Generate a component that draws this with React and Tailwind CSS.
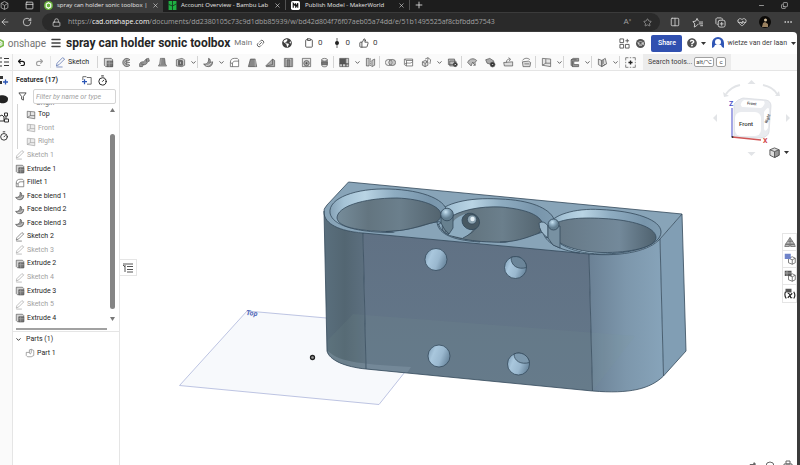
import { ArrowLeft, ChevronDown, Clipboard, Columns2, Copy, Ellipsis, GraduationCap, HeartPulse, Link2, Lock, Menu, Minus, PanelTop, Plus, Redo2, RotateCw, Star, ThumbsUp, Timer, Undo2, X } from "lucide-react"
import { FaQuestionCircle, FaGlobeAmericas } from "react-icons/fa"

const shapes = {
  extrude: (
    <>
      <path d="M2 2h10l2 2v10H4l-2-2z" fill="#d4d4d4" />
      <path d="M6 6h8v8H6z" fill="#777" />
      <path d="M6 9h8M9 6v8" stroke="#aaa" />
    </>
  ),
  revolve: (
    <>
      <path d="M13 4a6 6 0 1 0 0 8l-3-2a2.500 2.500 0 1 1 0-4z" fill="#aaa" />
      <path d="M8 5v6M8 8h5" />
    </>
  ),
  sweep: (
    <>
      <path d="M1 14c-1-6 2-7 5-7s2-5 8-5l1 4c-4 0-2 4-6 5s-3 0-4 3z" fill="#999" />
      <path d="M11 3v4M3 10l4 1" />
    </>
  ),
  loft: (
    <>
      <path d="M5 2h6l1 8 2 3H2l2-3z" fill="#888" />
      <path d="M2 13h12M6 2l-1 9" stroke="#bbb" />
    </>
  ),
  thicken: (
    <>
      <path d="M2 4l8-2 4 2v8l-4 2-8-1z" fill="#ccc" />
      <path d="M5 5h6v7H5z" fill="#666" />
      <path d="M14 4l-3 1M8 7v3" stroke="#ddd" />
    </>
  ),
  blend: (
    <>
      <path d="M1 10c4 1 8-2 7-8l2 1c1 3 1 4 0 5l4-1c0 4-2 7-6 7-4 0-6-2-7-4z" fill="#999" />
      <path d="M4 12c3 1 7-1 8-4" stroke="#eee" />
    </>
  ),
  fillet: <path d="M2 14V8c0-4 2-6 6-6h4l2 2v10zM2 8l3 2v4M5 10c0-3 2-4 5-4h4" fill="#fff" />,
  chamfer: (
    <>
      <path d="M5 3h7l2 11H2z" fill="#888" />
      <path d="M12 3v11" stroke="#ccc" />
    </>
  ),
  draft: (
    <>
      <path d="M1 13L11 3l3 2v9H2z" fill="#aaa" />
      <path d="M11 3v8L2 13" />
    </>
  ),
  rib: (
    <>
      <path d="M2 2h12v12H2z" fill="#ddd" />
      <path d="M6 4h4v10H6z" fill="#888" />
      <path d="M4 2v12M12 2v12" />
    </>
  ),
  shell: (
    <>
      <path d="M2 2h12v12H2z" fill="#e5e5e5" />
      <circle cx="8" cy="9" r="4" fill="#aaa" />
      <circle cx="8" cy="9" r="1" fill="#444" />
    </>
  ),
  cylinder: (
    <>
      <path d="M4 4v8c0 3 8 3 8 0V4z" fill="#ddd" />
      <path d="M4 7h8v4H4z" fill="#777" />
      <ellipse cx="8" cy="4" rx="4" ry="2" fill="#eee" />
    </>
  ),
  pattern: (
    <>
      <path d="M1 2h9v8H1z" fill="#555" />
      <path d="M10 2h4v8h-4zM1 10h4v4H1zM5 10h5v4H5zM10 10h4v4h-4z" fill="#ccc" />
    </>
  ),
  mirror: (
    <>
      <path d="M2 2h4v11H2zM10 5l4-2v9l-4 2z" fill="#ccc" />
      <path d="M8 2v12" strokeDasharray="2 1" />
    </>
  ),
  boolean: (
    <>
      <ellipse cx="5.500" cy="8" rx="5" ry="4.500" fill="#eee" />
      <ellipse cx="10.500" cy="8" rx="5" ry="4.500" fill="#9998" />
    </>
  ),
  split: <path d="M3 3h11v10H5l-3-2V3l3 2v8M5 5h9M3 10c4-3 6 1 11-3" fill="#fff" />,
  transform: (
    <>
      <path d="M2 7l4-2 4 2v5l-4 2-4-2zM2 7l4 2 4-2M6 9v5" fill="#ddd" />
      <path d="M6 3l4-2 4 3-1 6M10 1v4l-3 2" />
    </>
  ),
  deleteFace: (
    <>
      <path d="M2 3h9v8H2zM4 6h9v7H4z" fill="#bbb" />
      <circle cx="12" cy="11" r="3" fill="#333" />
      <path d="M11 10l2 2M13 10l-2 2" stroke="#fff" />
    </>
  ),
  moveFace: (
    <>
      <path d="M1 8c2-6 9-7 13-3l-3 4-3-1-2 5z" fill="#bbb" />
      <path d="M8 8l4 4M12 9v3H9" />
    </>
  ),
  offset: (
    <>
      <path d="M1 4l6-2 6 4-3 5-7-2z" fill="#aaa" />
      <circle cx="11" cy="11" r="3.500" fill="#333" />
      <path d="M10 11h2" stroke="#fff" />
    </>
  ),
  replace: (
    <>
      <path d="M1 8l13-1v6H2z" fill="#ddd" />
      <path d="M5 8c0-4 2-5 5-5M8 1l3 2-2 3" />
    </>
  ),
  fill: (
    <>
      <path d="M2 7l9-1 3 2-1 6H3z" fill="#ddd" />
      <path d="M2 5c3-4 8-4 11-1M5 10h7" />
    </>
  ),
  plane: (
    <>
      <path d="M2 2l12 1v11L2 12z" fill="#e5e5e5" />
      <path d="M7 3v6h7M7 9l-5 3" />
    </>
  ),
  frame: (
    <>
      <path d="M3 4l3-2h8v4H7v5h7v3H5l-2-2z" fill="#999" />
      <path d="M3 4h8M5 6v8" />
    </>
  ),
  sheet: (
    <>
      <path d="M2 3l5 2v9l-5-3zM7 5l5-3 2 8-7 4z" fill="#ddd" />
      <path d="M9 4v6M12 10l-3 3" />
    </>
  ),
  custom: (
    <>
      <path d="M1 5V1h4M11 1h4v4M15 11v4h-4M5 15H1v-4M7 1h2M7 15h2M1 7v2M15 7v2" />
      <path d="M8 5v6M5 8h6" stroke="#222" strokeWidth="2" />
    </>
  ),
  pencil: <path d="M2 13l1-4L11 1l3 2-8 8zM2 14.500h9" fill="none" />,
  part: <path d="M2 7h5V3l3-1 4 2v8l-4 2H4l-2-2zM7 7c0 3 3 3 3 0V2" fill="#fff" />,
}

const Glyph = ({ name, className = "size-3 text-neutral-600" }) => (
  <svg viewBox="0 0 16 16" className={className} fill="none" stroke="currentColor" strokeLinejoin="round" aria-hidden="true">
    {shapes[name]}
  </svg>
)

// "v" is a drop-down arrow, "|" a separator
const tools = [
  "|", "extrude", "revolve", "sweep", "loft", "thicken", "v",
  "|", "blend", "v", "fillet", "chamfer", "draft", "rib", "shell", "cylinder",
  "|", "pattern", "v", "mirror",
  "|", "boolean", "split", "transform", "v", "deleteFace",
  "|", "moveFace", "offset", "replace", "fill",
  "|", "plane", "v",
  "|", "frame", "v",
  "|", "sheet", "v",
  "|", "custom",
]

const features = [
  { name: "Top", icon: "plane", nested: true },
  { name: "Front", icon: "plane", nested: true, hidden: true },
  { name: "Right", icon: "plane", nested: true, hidden: true },
  { name: "Sketch 1", icon: "pencil", hidden: true },
  { name: "Extrude 1", icon: "extrude" },
  { name: "Fillet 1", icon: "fillet" },
  { name: "Face blend 1", icon: "blend" },
  { name: "Face blend 2", icon: "blend" },
  { name: "Face blend 3", icon: "blend" },
  { name: "Sketch 2", icon: "pencil" },
  { name: "Sketch 3", icon: "pencil", hidden: true },
  { name: "Extrude 2", icon: "extrude" },
  { name: "Sketch 4", icon: "pencil", hidden: true },
  { name: "Extrude 3", icon: "extrude" },
  { name: "Sketch 5", icon: "pencil", hidden: true },
  { name: "Extrude 4", icon: "extrude" },
]

function BrowserTabs() {
  return (
    <div className="flex h-3 shrink-0 items-center bg-[#1d1d1d] pr-2 pb-[2px] font-['Open_Sans',sans-serif] text-[6px] leading-[9px] text-neutral-200">
      <div className="flex w-10 items-center gap-4">
        <svg viewBox="0 0 16 16" className="size-[9px]" fill="none" stroke="#aaa" strokeWidth="1.500">
          <path d="M8 1l6 3v8l-6 3-6-3V4zM2 4l6 4 6-4M8 8v7" />
        </svg>
        <PanelTop className="size-[9px]" />
      </div>
      <div className="-mb-[2px] flex h-3 w-[123px] items-center gap-1 bg-[#3b3b3b] px-1 pb-[2px]">
        <svg viewBox="0 0 16 16" className="size-[9px] shrink-0">
          <circle cx="8" cy="8" r="8" fill="#69b13c" />
          <path d="M8 3l4 2.500v5L8 13l-4-2.500v-5z" fill="none" stroke="#fff" strokeWidth="2" />
        </svg>
        <span className="flex-1 whitespace-nowrap">spray can holder sonic toolbox |</span>
        <button aria-label="Close tab"><X className="size-[7px]" /></button>
      </div>
      <div className="flex h-full w-[123px] items-center gap-1 border-r border-neutral-600 pr-1 pl-[5px]">
        <svg viewBox="0 0 16 16" className="size-[9px] shrink-0">
          <path d="M1 0h14v16H1z" fill="#1fae42" />
          <path d="M8 0v16M1 6l7 3M8 9l7-4" stroke="#14351c" strokeWidth="1.500" />
        </svg>
        <span className="flex-1 whitespace-nowrap">Account Overview - Bambu Lab</span>
        <button aria-label="Close tab"><X className="size-[7px]" /></button>
      </div>
      <div className="flex h-full w-[124px] items-center gap-[5px] border-r border-neutral-600 pr-1 pl-[5px]">
        <svg viewBox="0 0 16 16" className="size-[9px] shrink-0">
          <rect width="16" height="16" rx="3" fill="#fff" />
          <path d="M4 12V4l4 5V4M8 12l4-8v8" fill="none" stroke="#111" strokeWidth="2" />
        </svg>
        <span className="flex-1 whitespace-nowrap">Publish Model - MakerWorld</span>
        <button aria-label="Close tab"><X className="size-[7px]" /></button>
      </div>
      <button aria-label="New tab" className="ml-1"><Plus className="size-[10px]" /></button>
      <div className="ml-auto flex items-center gap-4 pr-1">
        <button aria-label="Minimize"><Minus className="size-[7px]" /></button>
        <button aria-label="Restore"><Copy className="size-[7px] -scale-x-100 rotate-180" /></button>
      </div>
    </div>
  )
}

function AddressBar() {
  return (
    <div className="flex h-5 shrink-0 items-center bg-[#3b3b3b] text-neutral-300">
      <div className="flex w-[42px] items-center gap-3">
        <button aria-label="Back"><ArrowLeft className="size-[10px]" /></button>
        <button aria-label="Refresh"><RotateCw className="size-[10px]" /></button>
      </div>
      <div className="flex h-[18px] flex-1 items-center rounded-full bg-[#2a2a2a] pr-2 pl-[10px]">
        <Lock className="size-[9px]" />
        <p className="ml-[7px] flex-1 font-['Open_Sans',sans-serif] text-[7px] whitespace-nowrap text-neutral-400">
          https://<span className="text-neutral-100">cad.onshape.com</span>/documents/dd2380105c73c9d1dbb85939/w/bd42d804f76f07aeb05a74dd/e/51b1495525af8cbfbdd57543
        </p>
        <button aria-label="Read aloud" className="mr-3 text-[8px] text-neutral-400">A<sup className="text-[5px]">»</sup></button>
        <button aria-label="Add to favorites"><Star className="size-[9px] text-neutral-400" /></button>
      </div>
      <div className="flex w-[140px] items-center justify-between pr-[7px] pl-[10px]">
        <button aria-label="Split screen"><Columns2 className="size-[10px]" /></button>
        <button aria-label="Favorites">
          <svg viewBox="0 0 12 12" className="size-[11px]" fill="none" stroke="currentColor" strokeLinejoin="round">
            <path d="M7 7.500L5 9.500 2.500 11 3 7.500 1 5l3-.5L5.500 1.500 7 4.500M7.500 5.500H12M7.500 7.500H12M9 9.500h3" />
          </svg>
        </button>
        <button aria-label="Collections">
          <svg viewBox="0 0 12 12" className="size-[11px]" fill="none" stroke="currentColor">
            <path d="M3 8H2L1 7V2l1-1h5l1 1v1" />
            <rect x="3.500" y="3.500" width="7.500" height="7.500" rx="2" />
            <path d="M7.300 5.500v4M5.300 7.500h4" />
          </svg>
        </button>
        <button aria-label="Browser essentials"><HeartPulse className="size-[10px]" /></button>
        <button aria-label="Profile">
          <svg viewBox="0 0 12 12" className="size-3">
            <circle cx="6" cy="6" r="6" fill="#0c0a08" />
            <path d="M3 11l1-4 2-1 3 2v3z" fill="#9a815f" />
            <circle cx="6.500" cy="4" r="1.500" fill="#d9c3a0" />
          </svg>
        </button>
        <button aria-label="More"><Ellipsis className="size-[10px]" /></button>
      </div>
    </div>
  )
}

function DocumentHeader() {
  return (
    <header className="flex h-[22px] shrink-0 items-center text-neutral-700">
      <a href="#home" className="flex w-[46px] items-center text-[10px] text-neutral-500">
        <svg viewBox="0 0 6 12" className="mr-[3px] h-[11px] w-[6px]">
          <path d="M-1 1l5 2.500v5L-1 11" fill="none" stroke="#78b84a" strokeWidth="2" />
          <path d="M-1 4l2.500 1v2.500L-1 9" fill="none" stroke="#a5cf86" />
        </svg>
        onshape
      </a>
      <button aria-label="Menu" className="ml-1"><Menu className="size-[12px]" strokeWidth={3} /></button>
      <h1 className="ml-1 text-[12px] font-bold whitespace-nowrap text-neutral-800">spray can holder sonic toolbox</h1>
      <span className="ml-1 text-[8px] text-neutral-500">Main</span>
      <Link2 className="ml-1 size-[9px] -rotate-45" />
      <FaGlobeAmericas className="ml-[17px] size-[10px]" />
      <div className="ml-3 flex items-center gap-[9px] text-[8px]">
        <span className="flex items-center gap-1"><Clipboard className="size-[10px]" />0</span>
        <span className="flex items-center gap-1">
          <svg viewBox="0 0 10 10" className="size-[10px]"><path d="M5 0v10" stroke="#666" /><circle cx="5" cy="5" r="2" fill="#222" /></svg>0
        </span>
        <span className="flex items-center gap-1"><ThumbsUp className="size-[10px]" />0</span>
      </div>
      <div className="ml-auto flex items-center">
        <button aria-label="App store">
          <svg viewBox="0 0 12 12" className="size-[11px]" fill="none" stroke="#555">
            <path d="M1 1h4v4H1zM1 7h4v4H1zM7 7h4v4H7zM9 1v4M7 3h4" />
          </svg>
        </button>
        <button aria-label="Learning center" className="ml-[6px] rounded-full bg-neutral-600 p-px text-white"><GraduationCap className="size-[7px]" /></button>
        <button className="ml-[6px] h-[17px] w-[31px] rounded-xs bg-[#3050b0] text-[7px] font-medium text-white">Share</button>
        <button aria-label="Help" className="ml-[5px] flex items-center gap-1"><FaQuestionCircle className="size-[10px] text-neutral-600" /><Caret /></button>
        <button className="ml-[6px] flex items-center text-[7px] whitespace-nowrap">
          <svg viewBox="0 0 12 12" className="mr-[3px] size-3">
            <path d="M0 11V6a6 6 0 0 1 12 0v5l-2-1-1-2H3l-1 2z" fill="#2f55b5" />
            <circle cx="6" cy="5" r="3" fill="#fff" />
          </svg>
          wietze van der laan
          <span className="mr-px ml-1"><Caret /></span>
        </button>
      </div>
    </header>
  )
}

const Caret = () => (
  <svg viewBox="0 0 5 3" className="h-[3px] w-[5px]"><path d="M0 0h5L2.500 3z" fill="#333" /></svg>
)

function Toolbar() {
  return (
    <div className="flex h-[17px] shrink-0 items-center border-b border-neutral-200 bg-[#fafafa] text-neutral-600">
      <button aria-label="Feature list" className="flex h-full w-[13px] items-center border-r border-neutral-200">
        <svg viewBox="0 0 9 10" className="h-[10px] w-[9px]" fill="none" stroke="#333"><path d="M0 1h2M0 5h2M0 9h2M4 1.500h5M4 5h5M4 8.500h5" /></svg>
      </button>
      <button aria-label="Undo" className="ml-1 w-[10px]"><Undo2 className="size-[9px] text-neutral-900" strokeWidth={3} /></button>
      <button aria-label="Redo" className="ml-2 w-[15px]"><Redo2 className="size-[9px] text-neutral-400" strokeWidth={3} /></button>
      <button className="flex h-3 w-[47px] items-center gap-[2px] border-l border-neutral-200 pl-1 text-[7px] text-neutral-800">
        <Glyph name="pencil" className="size-[11px] text-[#4a64a8]" />
        Sketch
      </button>
      {tools.map((tool, index) => {
        if (tool === "|") return <span key={index} className="h-3 w-[2px] border-l border-neutral-300" />
        if (tool === "v")
          return (
            <button key={index} aria-label="More tools" className="flex w-2 justify-center">
              <ChevronDown className="size-[7px]" strokeWidth={3} />
            </button>
          )
        return (
          <button key={index} aria-label={tool} className="flex w-[18px] justify-center">
            <Glyph name={tool} className="size-[11px]" />
          </button>
        )
      })}
      <button className="ml-1 flex h-4 items-center gap-[2px] bg-neutral-200/70 px-[5px] text-[8px] whitespace-nowrap text-neutral-700">
        <span className="text-[7px]">Search tools...</span>
        <kbd className="rounded-xs border border-neutral-400 bg-white px-px font-['Roboto',sans-serif] text-[6px] leading-[8px]">alt/⌥</kbd>
        <kbd className="rounded-xs border border-neutral-400 bg-white px-[2px] font-['Roboto',sans-serif] text-[6px] leading-[8px]">c</kbd>
      </button>
    </div>
  )
}

function FeaturePanel() {
  return (
    <aside className="flex w-[107px] shrink-0 flex-col border-r border-neutral-200 bg-white text-[7px] leading-[9px] text-neutral-800">
      <div className="flex h-[18px] items-center pr-[11px] pl-[3px]">
        <h2 className="flex-1 font-semibold">Features (17)</h2>
        <button aria-label="Add folder">
          <svg viewBox="0 0 12 12" className="size-[10px]" fill="none" stroke="#555">
            <path d="M1 6V2h4l1 1h5v8H6" />
            <path d="M0 8h6M3 5v6" stroke="#2a55b5" strokeWidth="1.500" />
          </svg>
        </button>
        <button aria-label="Rebuild times" className="ml-[5px]"><Timer className="size-[11px] text-neutral-900" /></button>
      </div>
      <div className="flex items-center gap-[6px] pr-[3px] pl-[5px]">
        <svg viewBox="0 0 10 10" className="size-[9px] shrink-0" fill="none" stroke="#444"><path d="M1 1h8L6 5v4L4 8V5z" /></svg>
        <input aria-label="Filter features" placeholder="Filter by name or type" className="h-[15px] w-full min-w-0 rounded-xs border border-neutral-300 px-[2px] italic placeholder:text-neutral-400" />
      </div>
      <div className="flex">
        <div className="min-w-0 flex-1">
          <div className="ml-1 flex h-1 items-end overflow-hidden border-l border-neutral-300 pl-[18px] text-neutral-500">Origin</div>
          <ul className="grid h-[217px] auto-rows-fr">
            {features.map((feature) => (
              <li key={feature.name} className={feature.nested ? "ml-1 flex border-l border-neutral-300 pl-2" : "flex pl-[2px]"}>
                <button className={feature.hidden ? "flex items-center gap-[2px] text-neutral-400" : "flex items-center gap-[2px]"}>
                  <Glyph name={feature.icon} className={feature.hidden ? "size-[10px] text-neutral-500 opacity-70" : "size-[10px] text-neutral-600"} />
                  {feature.name}
                </button>
              </li>
            ))}
          </ul>
        </div>
        <div className="mr-1 flex w-[5px] flex-col items-center py-1">
          <svg viewBox="0 0 5 4" className="h-1 w-[5px]"><path d="M0 4h5L2.500 0z" fill="#777" /></svg>
          <span className="mt-[22px] mb-2 w-[5px] flex-1 rounded-full bg-[#858585]" />
          <svg viewBox="0 0 5 4" className="h-1 w-[5px]"><path d="M0 0h5L2.500 4z" fill="#777" /></svg>
        </div>
      </div>
      <div className="mt-[3px] mr-3 ml-[3px] h-[2px] bg-neutral-400" />
      <div className="mt-px border-t border-neutral-200 pt-px">
        <button className="flex h-[13px] items-center gap-1 pl-[2px]"><ChevronDown className="size-[7px]" strokeWidth={3} />Parts (1)</button>
        <button className="flex h-[14px] items-center gap-[2px] pl-3"><Glyph name="part" className="size-[10px] text-neutral-500" />Part 1</button>
      </div>
    </aside>
  )
}

function Model() {
  return (
    <svg viewBox="120 71 677 394" className="h-full w-full" preserveAspectRatio="xMinYMin meet" role="img" aria-label="Spray can holder model">
      <defs>
        <linearGradient id="leftSide"><stop offset="0" stopColor="#5a6f7d" /><stop offset=".5" stopColor="#536672" /><stop offset="1" stopColor="#5d7080" /></linearGradient>
        <linearGradient id="rightSide"><stop offset="0" stopColor="#6b8195" /><stop offset=".5" stopColor="#7d97ac" /><stop offset="1" stopColor="#87a4ba" /></linearGradient>
        <linearGradient id="front" x2="0" y2="1"><stop offset="0" stopColor="#607184" /><stop offset="1" stopColor="#64788a" /></linearGradient>
        <linearGradient id="bore"><stop offset="0" stopColor="#768c9a" /><stop offset=".3" stopColor="#637580" /><stop offset=".6" stopColor="#6b7f8c" /><stop offset="1" stopColor="#53646f" /></linearGradient>
        <linearGradient id="bore3"><stop offset="0" stopColor="#647683" /><stop offset=".65" stopColor="#73899a" /><stop offset="1" stopColor="#4f626f" /></linearGradient>
        <linearGradient id="rim"><stop offset="0" stopColor="#86a2b6" /><stop offset=".12" stopColor="#a5c3d6" /><stop offset=".3" stopColor="#b9d4e4" /><stop offset=".55" stopColor="#8eacc1" /><stop offset=".85" stopColor="#7895ab" /><stop offset="1" stopColor="#7f9cb1" /></linearGradient>
        <linearGradient id="bolt" x2="1" y2=".4"><stop offset="0" stopColor="#7896ae" /><stop offset=".35" stopColor="#a9c7dd" /><stop offset=".7" stopColor="#9ab8cf" /><stop offset="1" stopColor="#718ea5" /></linearGradient>
        <radialGradient id="ball" cx=".4" cy=".3"><stop offset="0" stopColor="#c9e3f2" /><stop offset=".5" stopColor="#8eacc0" /><stop offset="1" stopColor="#637e90" /></radialGradient>
      </defs>

      {/* top plane and origin */}
      <path d="M247 311L440 328 379 404.500 179.500 385.500z" fill="#f7f9fc" stroke="#b5bddf" strokeWidth=".9" />
      <text x="246" y="315" transform="rotate(5 246 315)" className="font-['Roboto',sans-serif] text-[7px] font-bold italic" fill="#4a62b5">Top</text>
      <circle cx="312.500" cy="357.500" r="2" fill="#999" stroke="#222" strokeWidth="1.300" />

      {/* body */}
      <path d="M324 211L327 351C329 360 345 367 366 369L363 233C341 231 325 223 324 211z" fill="url(#leftSide)" />
      <path d="M363 232L589 253 592.500 391 366 369z" fill="url(#front)" />
      <path d="M589 253C625 257 650 250 660 239L663.500 376C650 389 630 394 592.500 391z" fill="url(#rightSide)" />
      <path d="M660 239L682 214 686 351 663.500 376z" fill="#819eb4" />
      <path d="M353 314L635 336 592.500 391 366 369C345 367 329 360 327 351L327 341z" fill="#7e9a8f" opacity=".1" />
      <path d="M328 351C340 363 365 364 411 367L407 373 366 369C345 367 329 360 328 351z" fill="#8499a8" opacity=".45" />
      <path d="M348.500 182L682 214 660 239C650 250 625 257 589 254L363 233C339 231 325 224 324 213Q323 209 327 205z" fill="#88a4b8" />

      <g stroke="#33495a" strokeWidth=".8" fill="none">
        {/* middle rim first, the outer two lap over it */}
        <path d="M437 213C445 204 466 197 500 199C530 200 549 208 554 219L548 237C533 245 460 243 445 233C439 228 437 223 437 213z" fill="url(#rim)" />
        <path d="M447 219C460 210 480 206 501 207C524 209 538 214 542 222C545 233 533 241 506 242C480 243 452 239 443 231C441 226 443 222 447 219z" fill="url(#bore)" />
        <path d="M449 235C447 226 454 217 468 213C475 217 480 229 463 238z" fill="#8eacc0" stroke="none" />
        <path d="M463 238C473 233 479 227 478 221" />
        <ellipse cx="471" cy="221.500" rx="9" ry="8" fill="#485963" transform="rotate(30 471 221)" />
        <circle cx="472" cy="219.500" r="4.600" fill="#8fa6b3" />
        <circle cx="472.500" cy="219" r="2.200" fill="#e6f1f7" stroke="none" />

        <path d="M330 213C328 198 356 188 389 189C423 190 449 200 447 215C446 225 425 232 388 232.500C355 232 332 225 330 213z" fill="url(#rim)" />
        <path d="M337 218C337 207 362 198 397 198C422 199 441 206 441 215C441 225 416 231 386 231.500C358 231 338 227 337 218z" fill="url(#bore)" />
        <path d="M549 225C552 215 575 208 600 209.500C636 211 661 220 661 232C661 246 630 254 600 254C571 253 550 243 549 225z" fill="url(#rim)" />
        <path d="M553 225C561 219 579 217 603 218.500C633 220 655 227 656 237C657 247 630 253 602 252.500C574 252 553 243 551 232z" fill="url(#bore3)" />

        {/* webs between the bores */}
        <path d="M392 231.500C415 230 428 224 437 222C438 232 446 238 462 241L400 235z" fill="#88a4b8" stroke="none" />
        <path d="M386 231.500C412 231 426 223 437 222C438 232 448 240 480 242" />
        <path d="M505 242C522 241 532 235 543 232C545 239 552 247 566 251L520 246z" fill="#88a4b8" stroke="none" />
        <path d="M500 242C520 242 532 235 543 232C545 242 558 250 580 253" />
        <path d="M437 222C441 220 444 226 446 232" />
        <path d="M441 216V223Q444 230 449 234L453 228V214z" fill="#67808f" />
        <circle cx="447" cy="214.500" r="6.300" fill="url(#ball)" />
        <path d="M539 223Q544 220 548 226V238Q539 232 539 223z" fill="#9db8ca" />
        <path d="M548 226V238L553 245 560 248V226z" fill="#7891a2" />
        <circle cx="553.500" cy="224.500" r="5.500" fill="url(#ball)" />

        <path d="M348.500 182L682 214 660 239C650 250 625 257 589 254L363 233C339 231 325 224 324 213Q323 209 327 205z" />
        <path d="M324 211L327 351C329 360 345 367 366 369L592.500 391C630 394 650 389 663.500 376L686 351 682 214M363 233L366 369M589 254L592.500 391M660 239L663.500 376" />

        {/* bolt holes */}
        <circle cx="436" cy="259.500" r="11" fill="url(#bolt)" />
        <circle cx="439" cy="356" r="11" fill="url(#bolt)" />
        <circle cx="515.500" cy="267.500" r="11" fill="url(#bolt)" />
        <path d="M511 257.500C511 266 518 270 526.500 267.500A11 11 0 0 0 511 257.500z" fill="#6b8599" />
        <circle cx="518.500" cy="364" r="11" fill="url(#bolt)" />
        <path d="M514 354C514 361 521 365 529.500 362.500A11 11 0 0 0 514 354z" fill="#7d99ae" />
      </g>
    </svg>
  )
}

function ViewCube() {
  return (
    <svg viewBox="710 76 82 84" className="h-[84px] w-[82px] font-['Roboto',sans-serif]" role="img" aria-label="View cube">
      <g fill="#e2e4e7">
        <path d="M751.500 80l4 4h-8zM751.500 156l4-4h-8zM713 118l4-4v8zM790 118l-4-4v8zM723 92l1 5 5-1zM780 96l-1-5-4 5z" />
        <path d="M726 94Q731 87 740 85M763 85Q773 87 777 94" fill="none" stroke="#e2e4e7" strokeWidth="2" />
      </g>
      <path d="M734 104q4-5 9-6l23 2q5 1 5 6l-2 26q-1 5-8 6l-27-1z" fill="#e9ebef" stroke="#d5d9de" strokeWidth=".7" />
      <rect x="735" y="112" width="26" height="24" rx="6" fill="#fff" />
      <path d="M744 100l20 1q2 4-3 7l-19-1q-3-4 2-7z" fill="#fff" />
      <path d="M764 112q4-6 5-3l-1 19q-3 5-4 1z" fill="#fff" />
      <path d="M732 108v29" stroke="#7377d8" strokeWidth="1.300" />
      <path d="M732 137l29 3" stroke="#d05555" strokeWidth="1.300" />
      <circle cx="732.500" cy="137" r="1" fill="#333" />
      <text x="729" y="106" fontSize="7" fontWeight="700" fill="#4a50c8">Z</text>
      <text x="763" y="143" fontSize="7" fontWeight="700" fill="#d04545">X</text>
      <text x="739" y="126" fontSize="6" fontWeight="500" fill="#333">Front</text>
      <text x="747" y="104.500" fontSize="4" fontWeight="700" fill="#555" transform="rotate(5 747 104)">Front</text>
      <text x="764" y="123" fontSize="4" fontWeight="700" fill="#555" transform="rotate(-70 766 121)">Right</text>
    </svg>
  )
}

const sideTools = [
  { label: "Appearance", art: <path d="M8 2l6 9H2zM2 11h5v3H1zM9 11h5l1 3H9zM8 2v12M5 7h7" fill="#bbb" stroke="#666" /> },
  { label: "Configurations", art: <><path d="M6 7l5-2 4 2v6l-4 2-5-2zM6 7l5 2 4-2M11 9v6" fill="#fff" stroke="#555" /><path d="M1 1h8v7H1z" fill="#6f83c9" /></> },
  { label: "Custom tables", art: <><path d="M6 7l5-2 4 2v6l-4 2-5-2zM6 7l5 2 4-2M11 9v6" fill="#fff" stroke="#555" /><path d="M1 1h9v7H1z" fill="#555" /><path d="M1 4h9M4 1v7" stroke="#bbb" /></> },
  { label: "Variables", art: <><path d="M2 1h8v5H2z" fill="#555" /><path d="M2 5q-2 5 1 9M13 5q3 5 0 9M5 7q3 0 4 6h2M11 7L5 13" fill="none" stroke="#222" strokeWidth="1.500" /></> },
]

function Viewport() {
  return (
    <main className="relative min-w-0 flex-1 bg-white">
      <Model />
      <button aria-label="Toggle list" className="absolute top-[188px] left-0 flex h-[17px] w-[17px] items-center justify-center border border-l-0 border-neutral-200 bg-white">
        <svg viewBox="0 0 11 10" className="h-[10px] w-[11px]" fill="none" stroke="#555"><path d="M0 1h10M4 3.500h6M4 6.500h6M4 9h6M2 2v7M0 2l2 2" /></svg>
      </button>
      <div className="absolute top-[5px] right-[5px]"><ViewCube /></div>
      <button aria-label="View options" className="absolute top-[76px] right-[8px] flex items-center gap-1">
        <svg viewBox="0 0 12 12" className="size-[11px]" stroke="#555">
          <path d="M1 3l5-2 5 2v6l-5 2.500L1 9z" fill="#ddd" />
          <path d="M6 5l5-2v6l-5 2.500z" fill="#999" />
          <path d="M1 3l5 2" />
        </svg>
        <Caret />
      </button>
      <div className="absolute top-[162px] right-0 flex w-[15px] flex-col divide-y divide-neutral-200 border border-neutral-200 bg-white">
        {sideTools.map((tool) => (
          <button key={tool.label} aria-label={tool.label} className="flex h-[17px] items-center justify-center">
            <svg viewBox="0 0 16 16" className="size-3">{tool.art}</svg>
          </button>
        ))}
      </div>
      <div className="absolute right-[4px] bottom-0 flex h-[5px] gap-2 overflow-hidden">
        <svg viewBox="0 0 10 10" className="size-[10px]"><path d="M1 9L3 4h3l1-2 2 2-2 3z" fill="#666" /></svg>
        <svg viewBox="0 0 10 10" className="size-[10px]" fill="none" stroke="#666"><path d="M1 6q0-4 4-4t4 4M3 6h4" /></svg>
        <svg viewBox="0 0 10 10" className="size-[10px]" fill="none" stroke="#666"><path d="M3 1h4v3H3zM1 4h8v5M1 9V4" /></svg>
      </div>
    </main>
  )
}

export default function App() {
  return (
    <div className="flex h-screen flex-col overflow-hidden bg-[#3b3b3b] font-['Roboto',sans-serif]">
      <BrowserTabs />
      <AddressBar />
      <div className="mr-[3px] flex min-h-0 flex-1 flex-col overflow-hidden rounded-tr bg-white">
        <DocumentHeader />
        <Toolbar />
        <div className="flex min-h-0 flex-1">
          <nav className="flex w-[13px] shrink-0 flex-col gap-2 border-r border-neutral-200 bg-[#fafafa] pt-1 text-neutral-900">
            <button aria-label="Insert">
              <svg viewBox="0 0 9 11" className="h-[11px] w-[9px]"><path d="M0 1h3v3H0zM0 6h2v3H0z" fill="#333" /><path d="M3 7h5M5.500 4.500v5" stroke="#2a55b5" strokeWidth="1.300" /></svg>
            </button>
            <button aria-label="Comments">
              <svg viewBox="0 0 9 10" className="h-[10px] w-[9px]"><path d="M-4 5c0-5 12-5 12 0s-7 5-9 3z" fill="#222" /></svg>
            </button>
            <button aria-label="Versions">
              <svg viewBox="0 0 9 11" className="h-[11px] w-[9px]" fill="none" stroke="#333"><path d="M4.500 1h3v3h-3zM4.500 7h4v3h-4zM0 4l2-1 2 2v4H0M6 4v3" /></svg>
            </button>
            <button aria-label="History" className="overflow-hidden"><Timer className="-ml-px size-[10px]" /></button>
          </nav>
          <FeaturePanel />
          <Viewport />
        </div>
      </div>
    </div>
  )
}
